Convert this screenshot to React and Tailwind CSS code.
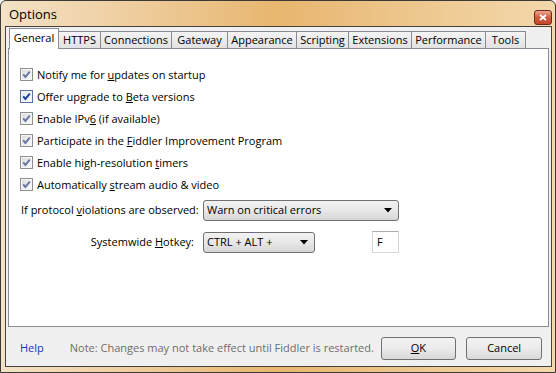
import React from "react";

const font = { fontFamily: '"Open Sans", "Noto Sans", sans-serif' };

function CheckBox({ strong }) {
  const check = strong ? "#1f3f9f" : "#6677a3";
  return (
    <svg width="13" height="13" viewBox="0 0 13 13" className="shrink-0">
      <defs>
        <linearGradient id={strong ? "cbs" : "cbw"} x1="0" y1="0" x2="1" y2="1">
          <stop offset="0" stopColor={strong ? "#dfe8f5" : "#dcdcdc"} />
          <stop offset="1" stopColor="#fbfbfb" />
        </linearGradient>
      </defs>
      <rect x="0.5" y="0.5" width="12" height="12" fill="#f4f4f4" stroke={strong ? "#5a6f9a" : "#8e8f8f"} />
      <rect x="2" y="2" width="9" height="9" fill={`url(#${strong ? "cbs" : "cbw"})`} />
      <path d="M3.2 6.3 L5.4 8.9 L9.8 3.6" fill="none" stroke={check} strokeWidth="1.9" />
    </svg>
  );
}

function Check({ strong, children }) {
  return (
    <div className="h-[22px] flex items-center gap-[4px]">
      <CheckBox strong={strong} />
      <span className="text-[11px] text-black leading-none whitespace-nowrap">{children}</span>
    </div>
  );
}

function Dropdown({ width, children }) {
  return (
    <div
      className={`${width} h-[21px] flex items-center justify-between pl-[3px] pr-[6px] rounded-[3px] border border-[#707070] bg-gradient-to-b from-[#f2f2f2] via-[#e8e8e8] to-[#d6d6d6] text-[11px] text-black whitespace-nowrap`}
    >
      <span>{children}</span>
      <svg width="8" height="5" viewBox="0 0 8 5">
        <path d="M0 0 H8 L4 4.5 Z" fill="#000" />
      </svg>
    </div>
  );
}

const tabs = [
  ["General", "w-[50px]"],
  ["HTTPS", "w-[42px]"],
  ["Connections", "w-[71px]"],
  ["Gateway", "w-[56px]"],
  ["Appearance", "w-[69px]"],
  ["Scripting", "w-[52px]"],
  ["Extensions", "w-[63px]"],
  ["Performance", "w-[74px]"],
  ["Tools", "w-[40px]"],
];

export default function App() {
  return (
    <div
      className="w-[556px] h-[373px] flex flex-col rounded-t-[6px] border border-[#3c3a36] bg-gradient-to-r from-[#f3e2c6] via-[#e8b66f] to-[#f3d8ac]"
      style={font}
    >
      {/* title bar */}
      <div className="h-[25px] flex items-center justify-between pl-[8px] pr-[4px]">
        <span className="text-[13px] text-black leading-none pt-[1px]">Options</span>
        <div className="w-[18px] h-[15px] mt-[7px] mr-[-1px] rounded-[3px] border border-[#6b2a1c] bg-gradient-to-b from-[#eba48f] via-[#d25c40] to-[#c4452c] flex items-center justify-center">
          <svg width="8" height="7" viewBox="0 0 8 7">
            <path d="M1 1 L7 6 M7 1 L1 6" stroke="#fff" strokeWidth="1.8" />
          </svg>
        </div>
      </div>

      {/* client area */}
      <div className="flex-1 ml-[4px] mr-[3px] mb-[5px] border border-[#45423d] bg-[#f0f0f0] flex flex-col pl-[2px] pr-[2px] pt-[1px]">
        {/* tabs */}
        <div className="h-[21px] flex items-end pl-[2px] relative z-10">
          {tabs.map(([label, w], i) =>
            i === 0 ? (
              <div
                key={label}
                className={`${w} h-[21px] -ml-[1px] border border-b-0 border-[#898c95] bg-white flex items-center justify-center text-[11px] text-black pb-[1px]`}
              >
                {label}
              </div>
            ) : (
              <div
                key={label}
                className={`${w} h-[17px] border border-l-0 border-b-0 border-[#898c95] bg-gradient-to-b from-[#f4f4f4] to-[#e2e2e2] flex items-center justify-center text-[11px] text-black mb-[1px]`}
              >
                {label}
              </div>
            )
          )}
        </div>

        {/* panel */}
        <div className="h-[279px] -mt-[1px] border border-[#898c95] bg-white pl-[11px] pt-[14px]">
          <Check>
            Notify me for <u>u</u>pdates on startup
          </Check>
          <Check strong>
            Offer upgrade to <u>B</u>eta versions
          </Check>
          <Check>
            Enable IPv<u>6</u> (if available)
          </Check>
          <Check>
            Participate in the <u>F</u>iddler Improvement Program
          </Check>
          <Check>
            Enable high-resolution <u>t</u>imers
          </Check>
          <Check>
            Automatically <u>s</u>tream audio &amp; video
          </Check>

          <div className="flex items-center mt-[5px]">
            <span className="w-[183px] pl-[1px] text-[11px] text-black whitespace-nowrap">
              If protocol <u>v</u>iolations are observed:
            </span>
            <Dropdown width="w-[196px]">Warn on critical errors</Dropdown>
          </div>
          <div className="flex items-center mt-[10px]">
            <span className="w-[183px] pr-[9px] text-right text-[11px] text-black whitespace-nowrap">
              Systemwide <u>H</u>otkey:
            </span>
            <Dropdown width="w-[112px]">CTRL + ALT +</Dropdown>
            <div className="ml-[57px] w-[27px] h-[22px] border border-[#d5d7dc] border-t-[#abadb3] bg-white pl-[4px] text-[11px] text-black flex items-center">
              F
            </div>
          </div>
        </div>

        {/* bottom bar */}
        <div className="flex-1 flex items-center pl-[12px] pr-[7px] pt-[4px]">
          <span className="text-[11px] text-[#1633c4] w-[50px]">Help</span>
          <span className="text-[11px] text-[#6d6d6d] w-[312px] whitespace-nowrap">
            Note: Changes may not take effect until Fiddler is restarted.
          </span>
          <button className="w-[76px] h-[23px] rounded-[3px] border border-[#707070] bg-gradient-to-b from-[#f3f3f3] via-[#ebebeb] to-[#d8d8d8] text-[11px] text-black">
            <u>O</u>K
          </button>
          <button className="ml-[10px] w-[76px] h-[23px] rounded-[3px] border border-[#707070] bg-gradient-to-b from-[#f3f3f3] via-[#ebebeb] to-[#d8d8d8] text-[11px] text-black">
            Cancel
          </button>
        </div>
      </div>
    </div>
  );
}
